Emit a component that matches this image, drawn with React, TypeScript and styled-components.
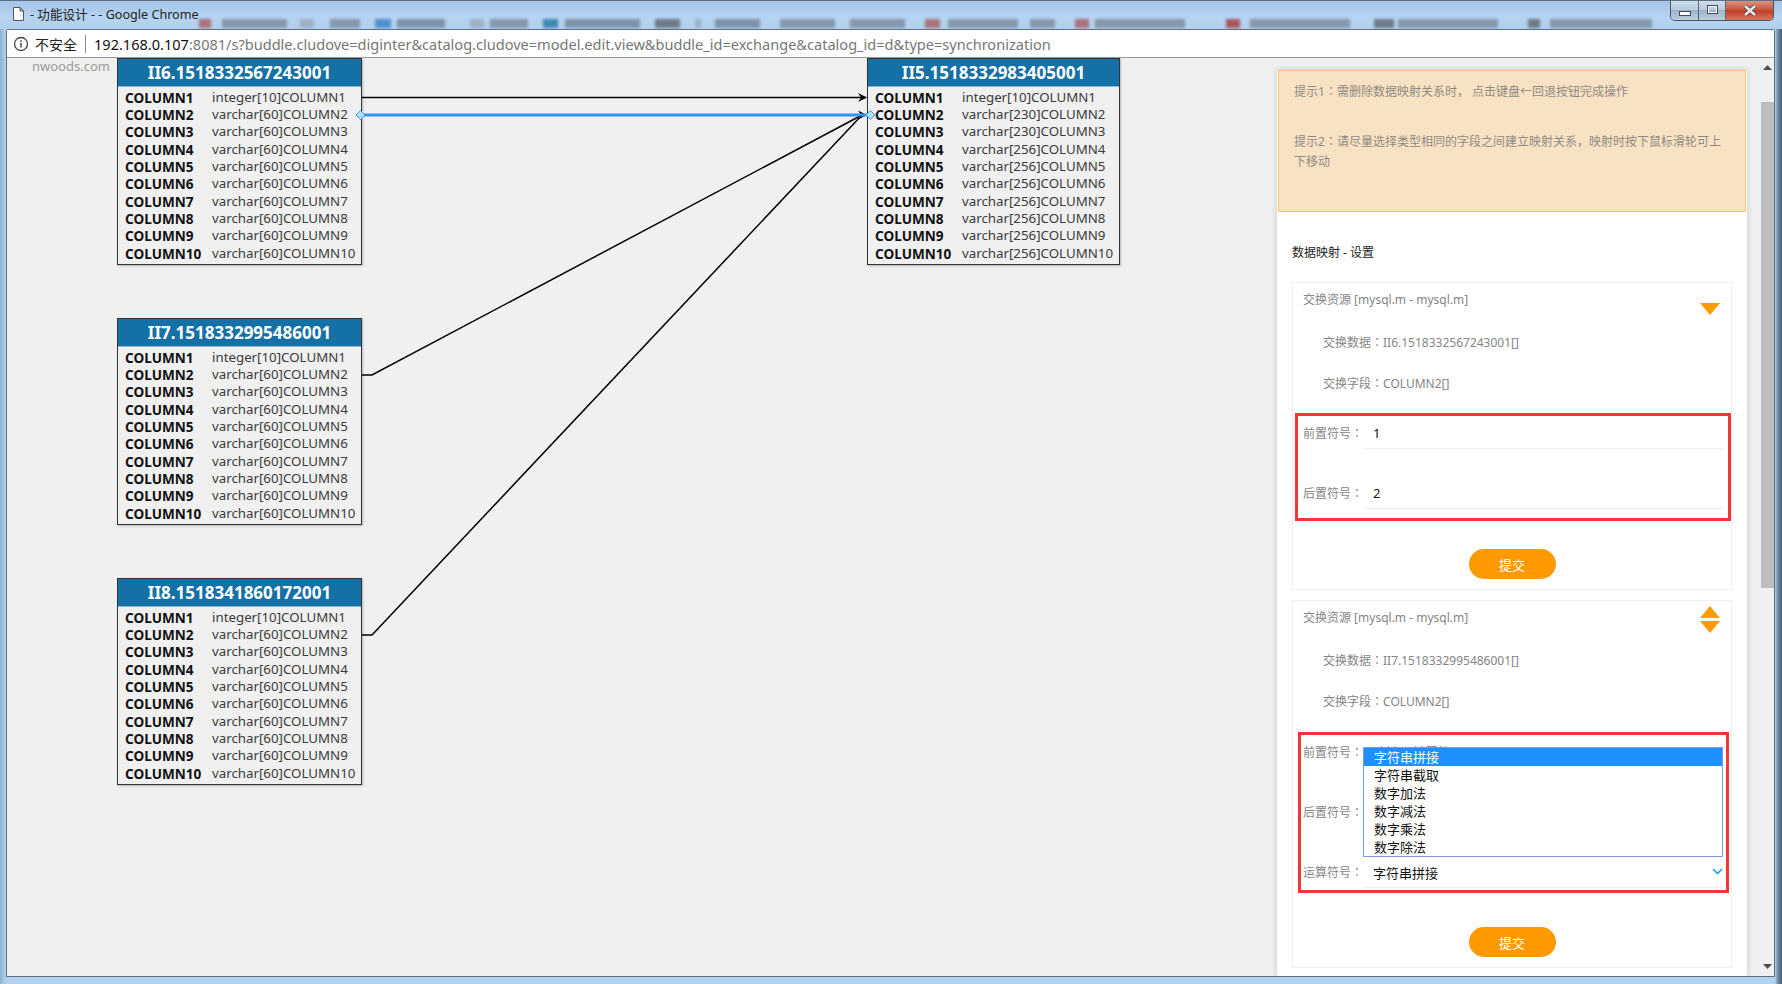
import React from 'react';
import styled, { createGlobalStyle } from 'styled-components';

const GlobalStyle = createGlobalStyle`
    html, body {
        margin: 0;
        padding: 0;
        background: #b4d2f0;
    }

    * {
        box-sizing: border-box;
    }
`;

const FONT = '"Noto Sans", "Noto Sans CJK SC", sans-serif';

interface TableData {
    name: string;
    x: number;
    y: number;
    width: number;
    types: string[];
}

const repeat = (first: string, rest: string): string[] => [first, ...Array(9).fill(rest)];

const TABLES: TableData[] = [
    { name: 'II6.1518332567243001', x: 110, y: 0, width: 245, types: repeat('integer[10]', 'varchar[60]') },
    { name: 'II7.1518332995486001', x: 110, y: 260, width: 245, types: repeat('integer[10]', 'varchar[60]') },
    { name: 'II8.1518341860172001', x: 110, y: 520, width: 245, types: repeat('integer[10]', 'varchar[60]') },
    {
        name: 'II5.1518332983405001',
        x: 860,
        y: 0,
        width: 253,
        types: ['integer[10]', 'varchar[230]', 'varchar[230]', ...Array(7).fill('varchar[256]')],
    },
];

const OPTIONS = ['字符串拼接', '字符串截取', '数字加法', '数字减法', '数字乘法', '数字除法'];

// the blurred taskbar that shows through the glass title bar
const TASK_ITEMS = [
    { gap: 0, width: 12, color: '#a8727c' },
    { gap: 11, width: 65, color: '#8497ad' },
    { gap: 13, width: 14, color: '#9db0c6' },
    { gap: 16, width: 30, color: '#8497ad' },
    { gap: 15, width: 16, color: '#4f8fd0' },
    { gap: 6, width: 48, color: '#7e92aa' },
    { gap: 25, width: 14, color: '#9db0c6' },
    { gap: 6, width: 38, color: '#8497ad' },
    { gap: 15, width: 15, color: '#3f88b5' },
    { gap: 7, width: 75, color: '#7e92aa' },
    { gap: 15, width: 25, color: '#6d7a8a' },
    { gap: 15, width: 6, color: '#9db0c6' },
    { gap: 14, width: 45, color: '#7e92aa' },
    { gap: 20, width: 55, color: '#8497ad' },
    { gap: 15, width: 55, color: '#8497ad' },
    { gap: 20, width: 15, color: '#a8727c' },
    { gap: 8, width: 70, color: '#8497ad' },
    { gap: 12, width: 25, color: '#8497ad' },
    { gap: 20, width: 14, color: '#a8727c' },
    { gap: 6, width: 90, color: '#8497ad' },
    { gap: 41, width: 14, color: '#a8565c' },
    { gap: 10, width: 100, color: '#8497ad' },
    { gap: 24, width: 20, color: '#6d7a8a' },
    { gap: 4, width: 100, color: '#8497ad' },
    { gap: 30, width: 12, color: '#6d7a8a' },
    { gap: 10, width: 102, color: '#8497ad' },
];

const ArrowHead = ({ x, y }: { x: number; y: number }): JSX.Element => (
    <polygon points={`${x - 9},${y - 4.5} ${x},${y} ${x - 9},${y + 4.5} ${x - 6},${y}`} fill="#000" />
);

const Links = (): JSX.Element => (
    <LinkLayer viewBox="7 58 1268 918">
        <path d="M362 97.5 H866" stroke="#000" strokeWidth="1.5" fill="none" />
        <ArrowHead x={867} y={97.5} />
        <path d="M362 375 H372 L862 115" stroke="#000" strokeWidth="1.5" fill="none" />
        <path d="M362 635 H372 L862 115" stroke="#000" strokeWidth="1.5" fill="none" />
        <ArrowHead x={867} y={115} />
        <path d="M362 115 H868" stroke="#2f96f5" strokeWidth="3" fill="none" />
        <path d="M356 115 L360.5 110.5 L365 115 L360.5 119.5 Z" fill="#b5dcff" stroke="#3a9bf5" />
        <path d="M866 115 L870.5 110.5 L875 115 L870.5 119.5 Z" fill="#b5dcff" stroke="#3a9bf5" />
    </LinkLayer>
);

const Table = ({ table }: { table: TableData }): JSX.Element => (
    <TableBox $x={table.x} $y={table.y} $width={table.width}>
        <TableHeader>{table.name}</TableHeader>
        <TableRows>
            {table.types.map((type, index) => (
                <TableRow key={index}>
                    <ColumnName>COLUMN{index + 1}</ColumnName>
                    <ColumnType>{type}COLUMN{index + 1}</ColumnType>
                </TableRow>
            ))}
        </TableRows>
    </TableBox>
);

const Triangle = ({ up }: { up?: boolean }): JSX.Element => (
    <svg width="20" height="12" viewBox="0 0 20 12">
        <path d={up ? 'M10 0 L20 12 H0 Z' : 'M0 0 H20 L10 12 Z'} fill="#ff9900" />
    </svg>
);

const App = (): JSX.Element => (
    <Window>
        <GlobalStyle />

        <TitleBar>
            <PageIcon width="11" height="14" viewBox="0 0 11 14">
                <path d="M0.5 0.5 H7 L10.5 4 V13.5 H0.5 Z M7 0.5 V4 H10.5" fill="#fff" stroke="#555" />
            </PageIcon>
            <WindowTitle>- 功能设计 - - Google Chrome</WindowTitle>
            <TaskStrip>
                {TASK_ITEMS.map((item, index) => (
                    <TaskItem key={index} $gap={item.gap} $width={item.width} $color={item.color} />
                ))}
            </TaskStrip>
            <WindowControls>
                <ControlButton $width={28}><MinimizeMark /></ControlButton>
                <ControlButton $width={27}><MaximizeMark /></ControlButton>
                <CloseButton>
                    <svg width="14" height="11" viewBox="0 0 14 11">
                        <path d="M2 1 L12 10 M12 1 L2 10" stroke="#4a3a3a" strokeWidth="4" />
                        <path d="M2 1 L12 10 M12 1 L2 10" stroke="#eee" strokeWidth="2.4" />
                    </svg>
                </CloseButton>
            </WindowControls>
        </TitleBar>

        <ClientArea>
            <AddressBar>
                <svg width="16" height="16" viewBox="0 0 16 16">
                    <circle cx="8" cy="8" r="6.5" fill="none" stroke="#444" strokeWidth="1.3" />
                    <path d="M8 7 V11.5 M8 4.2 V5.8" stroke="#444" strokeWidth="1.5" />
                </svg>
                <SecurityLabel>不安全</SecurityLabel>
                <AddressDivider />
                <UrlHost>192.168.0.107</UrlHost>
                <UrlRest>:8081/s?buddle.cludove=diginter&amp;catalog.cludove=model.edit.view&amp;buddle_id=exchange&amp;catalog_id=d&amp;type=synchronization</UrlRest>
            </AddressBar>

            <Page>
                <Canvas>
                    <Watermark>nwoods.com</Watermark>
                    {TABLES.map((table) => (
                        <Table key={table.name} table={table} />
                    ))}
                    <Links />
                </Canvas>

                <Panel>
                    <TipBox>
                        <Tip>提示1<Colon>：</Colon>需删除数据映射关系时， 点击键盘←回退按钮完成操作</Tip>
                        <Tip>提示2<Colon>：</Colon>请尽量选择类型相同的字段之间建立映射关系，映射时按下鼠标滑轮可上下移动</Tip>
                    </TipBox>

                    <SectionTitle>数据映射 - 设置</SectionTitle>

                    <Card>
                        <CardHeader>交换资源 [mysql.m - mysql.m]</CardHeader>
                        <Sorter $top={20}><Triangle /></Sorter>
                        <InfoRow>交换数据<Colon>：</Colon>II6.1518332567243001[]</InfoRow>
                        <InfoRow>交换字段<Colon>：</Colon>COLUMN2[]</InfoRow>
                        <FormBox $left={2} $top={10} $width={436} $pad={5} $bottom={9}>
                            <FormRow>
                                <FormLabel>前置符号<Colon>：</Colon></FormLabel>
                                <Field><FieldInput readOnly value="1" /></Field>
                            </FormRow>
                            <FormRow>
                                <FormLabel>后置符号<Colon>：</Colon></FormLabel>
                                <Field><FieldInput readOnly value="2" /></Field>
                            </FormRow>
                        </FormBox>
                        <SubmitButton $top={28}>提交</SubmitButton>
                    </Card>

                    <Card>
                        <CardHeader>交换资源 [mysql.m - mysql.m]</CardHeader>
                        <Sorter $top={5}><Triangle up /><Triangle /></Sorter>
                        <InfoRow>交换数据<Colon>：</Colon>II7.1518332995486001[]</InfoRow>
                        <InfoRow>交换字段<Colon>：</Colon>COLUMN2[]</InfoRow>
                        <FormBox $left={5} $top={11} $width={431} $pad={2} $bottom={2}>
                            <FormRow>
                                <FormLabel>前置符号<Colon>：</Colon></FormLabel>
                                <Field><FieldInput readOnly placeholder="请输入前置符号" /></Field>
                            </FormRow>
                            <FormRow>
                                <FormLabel>后置符号<Colon>：</Colon></FormLabel>
                                <Field><FieldInput readOnly placeholder="请输入后置符号" /></Field>
                            </FormRow>
                            <FormRow>
                                <FormLabel>运算符号<Colon>：</Colon></FormLabel>
                                <Field>
                                    <FieldInput readOnly value="字符串拼接" />
                                    <SelectChevron width="11" height="7" viewBox="0 0 11 7">
                                        <path d="M1 1 L5.5 5.5 L10 1" fill="none" stroke="#16a3e8" strokeWidth="1.6" />
                                    </SelectChevron>
                                    <Dropdown>
                                        {OPTIONS.map((option, index) => (
                                            <DropdownOption key={option} $active={index === 0}>{option}</DropdownOption>
                                        ))}
                                    </Dropdown>
                                </Field>
                            </FormRow>
                        </FormBox>
                        <SubmitButton $top={34}>提交</SubmitButton>
                    </Card>
                </Panel>

                <ScrollBar>
                    <ScrollArrow width="9" height="5" viewBox="0 0 9 5"><path d="M4.5 0 L9 5 H0 Z" fill="#505050" /></ScrollArrow>
                    <ScrollThumb />
                    <ScrollArrow width="9" height="5" viewBox="0 0 9 5"><path d="M0 0 H9 L4.5 5 Z" fill="#505050" /></ScrollArrow>
                </ScrollBar>
            </Page>
        </ClientArea>
    </Window>
);

const Window = styled.div`
    display: flex;
    flex-direction: column;

    width: 1782px;
    height: 984px;
    padding: 0 7px 7px 6px;
    overflow: hidden;

    font-family: ${FONT};
    background: linear-gradient(90deg, #8fb0d2 0, #b4d2f0 6px, #b4d2f0 calc(100% - 7px), #7f9cba calc(100% - 5px), #3f5670 100%);
    border-top: 1px solid #5d7186;
`;

const TitleBar = styled.div`
    position: relative;
    display: flex;
    flex: none;

    height: 28px;
    align-items: center;
    margin: 0 -7px 0 -6px;
    padding-left: 13px;

    background: linear-gradient(180deg, #a3c4e6 0, #b6d4f2 60%, #b2cfec 100%);
`;

const PageIcon = styled.svg`
    flex: none;
    margin-top: -2px;
`;

const WindowTitle = styled.div`
    flex: none;
    width: 169px;
    margin: -3px 0 0 6px;

    font-size: 12.6px;
    color: #222;
    white-space: nowrap;
`;

const TaskStrip = styled.div`
    display: flex;
    align-self: flex-end;

    height: 9px;
    margin-bottom: 1px;
    filter: blur(1.5px);
`;

const TaskItem = styled.div<{ $gap: number; $width: number; $color: string }>`
    width: ${(props) => props.$width}px;
    margin-left: ${(props) => props.$gap}px;
    background: ${(props) => props.$color};
`;

const WindowControls = styled.div`
    position: absolute;
    display: flex;

    top: -1px;
    right: 8px;
    height: 21px;

    border: 1px solid #45566a;
    border-top: none;
    border-radius: 0 0 5px 5px;
    overflow: hidden;
`;

const ControlButton = styled.div<{ $width: number }>`
    display: flex;
    width: ${(props) => props.$width}px;
    align-items: center;
    justify-content: center;

    background: linear-gradient(180deg, #d2e0ee 0, #b8cadc 50%, #9db2c8 52%, #bccfe0 100%);
    border-right: 1px solid #52647a;
`;

const MinimizeMark = styled.div`
    width: 12px;
    height: 5px;
    margin-top: 6px;

    background: #fff;
    border: 1px solid #3c4a5c;
`;

const MaximizeMark = styled.div`
    width: 11px;
    height: 9px;
    margin-top: -2px;

    border: 2px solid #fff;
    outline: 1px solid #3c4a5c;
    outline-offset: -1px;
`;

const CloseButton = styled.div`
    display: flex;
    width: 47px;
    align-items: center;
    justify-content: center;

    background: linear-gradient(180deg, #e09a88 0, #cc5a44 45%, #c0402a 55%, #d8745a 100%);
`;

const ClientArea = styled.div`
    display: flex;
    flex: 1;
    flex-direction: column;
    min-height: 0;

    background: #fff;
    border: 1px solid #5f6f80;
    border-radius: 2px 2px 0 0;
`;

const AddressBar = styled.div`
    display: flex;
    flex: none;

    height: 28px;
    align-items: center;
    padding-left: 6px;

    font-size: 14.55px;
    white-space: nowrap;
    overflow: hidden;
    background: #fff;
    border-bottom: 1px solid #9a9a9a;
`;

const SecurityLabel = styled.span`
    width: 42px;
    margin-left: 6px;
    font-size: 14px;
    color: #222;
`;

const AddressDivider = styled.span`
    flex: none;
    width: 1px;
    height: 18px;
    margin: 0 8px 0 8px;
    background: #888;
`;

const UrlHost = styled.span`
    color: #111;
`;

const UrlRest = styled.span`
    color: #777;
`;

const Page = styled.div`
    display: flex;
    flex: 1;
    min-height: 0;
    overflow: hidden;

    background: #f0f0f0;
`;

const Canvas = styled.div`
    position: relative;
    flex: none;
    width: 1270px;
    height: 100%;
`;

const LinkLayer = styled.svg`
    position: absolute;
    left: 0;
    top: 0;
    width: 1268px;
    height: 918px;
    pointer-events: none;
`;

const Watermark = styled.div`
    position: absolute;
    left: 25px;
    top: -1px;

    font-size: 13px;
    line-height: 18px;
    color: #999;
`;

const TableBox = styled.div<{ $x: number; $y: number; $width: number }>`
    position: absolute;
    left: ${(props) => props.$x}px;
    top: ${(props) => props.$y}px;
    width: ${(props) => props.$width}px;
    height: 207px;

    border: 1px solid #333;
    box-shadow: 1px 1px 2px rgba(0, 0, 0, 0.25);
`;

const TableHeader = styled.div`
    height: 28px;

    font-size: 17px;
    font-weight: 700;
    line-height: 27px;
    text-align: center;
    color: #fff;

    background: #1570a6;
    border-bottom: 1px solid #8fb8d2;
`;

const TableRows = styled.div`
    padding: 1.5px 0 0 7px;
`;

const TableRow = styled.div`
    display: flex;
    height: 17.35px;
    line-height: 17.35px;
    white-space: nowrap;
`;

const ColumnName = styled.span`
    width: 87px;
    font-size: 13.6px;
    font-weight: 700;
    color: #111;
`;

const ColumnType = styled.span`
    font-size: 13.3px;
    color: #3a3a3a;
`;

const Panel = styled.div`
    flex: none;
    width: 470px;
    margin-top: 12px;
    padding: 0 15px 0 15px;

    font-size: 12px;
    color: #858585;
    background: #fff;
    box-shadow: 0 0 6px rgba(0, 0, 0, 0.18);
`;

const Colon = styled.span`
    font-family: "Noto Sans CJK TC", sans-serif;
    line-height: 0;
`;

const TipBox = styled.div`
    height: 142px;
    margin: 0 -14px;
    padding: 11px 20px 0 15px;

    background: #f8e2c4;
    border: 1px solid #fcc573;
`;

const Tip = styled.p`
    margin: 0 0 30px;
    line-height: 20px;
    color: #8f8a80;
`;

const SectionTitle = styled.div`
    margin: 31px 0 19px;
    line-height: 20px;
    color: #222;
`;

const Card = styled.div`
    position: relative;
    margin-bottom: 10px;
    padding-bottom: 10px;

    border: 1px solid #eee;
`;

const CardHeader = styled.div`
    height: 38px;
    padding-left: 10px;
    line-height: 34px;
`;

const Sorter = styled.div<{ $top: number }>`
    position: absolute;
    display: flex;
    flex-direction: column;
    gap: 3px;

    right: 11px;
    top: ${(props) => props.$top}px;
`;

const InfoRow = styled.div`
    height: 41px;
    padding-left: 30px;
    line-height: 43px;
`;

const FormBox = styled.div<{ $left: number; $top: number; $width: number; $pad: number; $bottom: number }>`
    width: ${(props) => props.$width}px;
    margin: ${(props) => props.$top}px 0 0 ${(props) => props.$left}px;
    padding: 0 0 ${(props) => props.$bottom}px ${(props) => props.$pad}px;

    border: 3px solid #f33535;
`;

const FormRow = styled.div`
    display: flex;
    height: 33px;
    margin-bottom: 27px;

    &:last-child {
        margin-bottom: 0;
    }
`;

const FormLabel = styled.div`
    flex: none;
    width: 60px;
    line-height: 36px;
    white-space: nowrap;
`;

const Field = styled.div`
    position: relative;
    flex: none;
    width: 360px;

    border-bottom: 1px solid #eee;
`;

const FieldInput = styled.input`
    display: block;
    width: 100%;
    height: 32px;
    padding: 2px 10px 0;

    font-family: ${FONT};
    font-size: 13px;
    color: #111;
    border: none;
    outline: none;
    background: transparent;

    &::placeholder {
        color: #777;
    }
`;

const SelectChevron = styled.svg`
    position: absolute;
    right: 0;
    top: 13px;
`;

const Dropdown = styled.div`
    position: absolute;
    left: 0;
    bottom: calc(100% - 2px);
    width: 360px;
    height: 110px;

    background: #fff;
    border: 1px solid #7b9ad6;
`;

const DropdownOption = styled.div<{ $active: boolean }>`
    height: 18px;
    padding-left: 10px;

    font-size: 13px;
    line-height: 18px;
    color: ${(props) => (props.$active ? '#fff' : '#111')};
    background: ${(props) => (props.$active ? '#1e90ff' : 'transparent')};
`;

const SubmitButton = styled.button<{ $top: number }>`
    display: block;
    width: 87px;
    height: 30px;
    padding: 0;
    margin: ${(props) => props.$top}px auto 0;

    font-family: ${FONT};
    font-size: 13px;
    color: #fff;
    background: #ff9900;
    border: none;
    border-radius: 15px;
`;

const ScrollBar = styled.div`
    display: flex;
    flex: none;
    flex-direction: column;
    align-items: center;

    width: 16px;
    margin-left: 12px;
    padding: 7px 0;
`;

const ScrollArrow = styled.svg`
    flex: none;
`;

const ScrollThumb = styled.div`
    flex: none;
    width: 13px;
    height: 486px;
    margin: 32px 0 auto;
    background: #bdbdbd;
`;

export default App;
